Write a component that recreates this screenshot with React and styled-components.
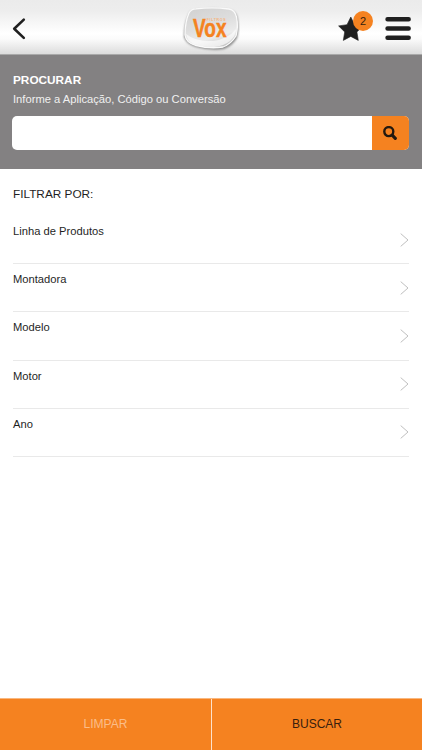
import React, { useState } from 'react';
import styled, { createGlobalStyle } from 'styled-components';

const GlobalStyle = createGlobalStyle`
  * { box-sizing: border-box; }
  body { margin: 0; background: #fff; }
  button, input { font: inherit; border: 0; padding: 0; margin: 0; background: none; }
`;

const Screen = styled.div`
  display: flex;
  flex-direction: column;
  width: 100%;
  height: 100vh;
  overflow: hidden;
  background: #fff;
  color: #1f1f1f;
  font-family: "Liberation Sans", Arial, sans-serif;
`;

const Header = styled.header`
  flex: none;
  display: grid;
  grid-template-columns: 1fr 58px 1fr;
  height: 55px;
  border-bottom: 1px solid #a9a9a9;
  background: linear-gradient(#ebebeb 0, #ededed 20%, #fff 62%, #fbfbfb 72%, #dcdcdc 100%);
`;

const HeaderSide = styled.div`
  display: flex;
  justify-content: ${({ $end }) => ($end ? 'flex-end' : 'flex-start')};
  align-items: flex-start;
`;

const IconButton = styled.button`
  position: relative;
  display: block;
  width: ${({ $width }) => $width}px;
  height: 54px;
  svg { display: block; }
`;

const Badge = styled.span`
  position: absolute;
  top: 10.5px;
  left: 16px;
  width: 20px;
  height: 20px;
  border-radius: 50%;
  background: #f58220;
  color: #33200f;
  font-size: 11px;
  line-height: 20px;
  text-align: center;
`;

const SearchPanel = styled.section`
  flex: none;
  height: 114px;
  padding: 17px 13px 0 12px;
  background: #838182;
  color: #fff;
`;

const Title = styled.h1`
  margin: 0 0 0 1px;
  font-size: 11.8px;
  line-height: 16px;
`;

const Hint = styled.p`
  margin: 4px 0 0 1px;
  font-size: 11.2px;
  line-height: 14px;
  color: #f0f0f0;
`;

const SearchField = styled.form`
  display: flex;
  height: 34px;
  margin-top: 10px;
  overflow: hidden;
  border-radius: 5px;
  background: #fff;
`;

const SearchInput = styled.input`
  flex: 1;
  min-width: 0;
  padding: 0 10px;
  outline: 0;
  font-size: 14px;
`;

const SearchButton = styled.button`
  display: flex;
  align-items: center;
  justify-content: center;
  width: 37px;
  padding: 0 1px 1px 0;
  background: #f58220;
`;

const Filters = styled.main`
  flex: 1;
  padding: 17px 13px 0;
`;

const FilterTitle = styled.h2`
  margin: 0 0 13px;
  font-size: 11.8px;
  font-weight: 400;
  line-height: 17px;
`;

const FilterRow = styled.div`
  display: flex;
  justify-content: space-between;
  height: 48.2px;
  border-bottom: 1px solid #e9e9e9;
  font-size: 11.2px;
  line-height: 14px;
  padding-top: 8px;
`;

const RowIcon = styled.span`
  display: flex;
  align-items: flex-start;
  padding-top: 8.5px;
`;

const Footer = styled.footer`
  flex: none;
  display: grid;
  grid-template-columns: 1fr 1fr;
  height: 52px;
  border-top: 1px solid #f9b77e;
  background: #f58220;
`;

const FooterButton = styled.button`
  color: ${({ $muted }) => ($muted ? '#fbbd88' : '#38200e')};
  font-size: 12px;
  padding-bottom: 1px;
  & + & { border-left: 1px solid #fde2cc; }
`;

const Logo = () => (
  <svg width="58" height="54" viewBox="0 0 58 54" aria-label="Filtros Vox">
    <defs>
      <linearGradient id="plate" x1="0.2" y1="0" x2="0.6" y2="1">
        <stop offset="0" stopColor="#d2d2d2" />
        <stop offset="0.45" stopColor="#dedede" />
        <stop offset="0.75" stopColor="#ececec" />
        <stop offset="1" stopColor="#c6c6c6" />
      </linearGradient>
      <filter id="shade" x="-20%" y="-20%" width="140%" height="140%">
        <feGaussianBlur stdDeviation="1" />
      </filter>
    </defs>
    <path d="M14 10Q31 7 48 10Q54 11 55.500 18Q57.500 29 55 38Q50 46 42 49Q29 51 14 47Q4 44 2 37Q2 23 7 14Q9 10 14 10Z" fill="#858585" filter="url(#shade)" />
    <path d="M14 8.800Q31 7 47 9Q53 10 54.500 17Q56.500 27 54 36Q49 44 41 47Q28 49 14 45.500Q4 43 3 35Q3 22 7 13Q9 9 14 8.800Z" fill="url(#plate)" stroke="#fafafa" strokeWidth="1.300" />
    <path d="M4 34Q14 42 31 41Q46 39 54 29Q54 36 48 41Q42 46 32 47Q20 47 12 44Q5 41 4 34Z" fill="#fff" opacity="0.65" />
    <text x="24.700" y="20.800" textLength="19" fontFamily="Liberation Sans" fontWeight="700" fontSize="3.600" fill="#f5b581">FILTROS</text>
    <text x="11" y="36.700" textLength="33.500" lengthAdjust="spacingAndGlyphs" fontFamily="Liberation Sans" fontWeight="700" fontSize="26.500" fill="#f58220" stroke="#f58220" strokeWidth="0.500">Vox</text>
  </svg>
);

const BackIcon = () => (
  <svg width="38" height="54" fill="none" stroke="#202020" strokeWidth="2.600" strokeLinecap="round" strokeLinejoin="round">
    <path d="M23.800 19.600L14.200 28.700L23.800 37.900" />
  </svg>
);

const StarIcon = () => (
  <svg width="36" height="54" fill="#202020">
    <path d="M13.800 17L17.600 24.700L26 25.900L19.900 31.900L21.300 40.400L13.800 36.400L6.300 40.400L7.700 31.900L1.600 25.900L10 24.700Z" stroke="#202020" strokeWidth="0.600" />
  </svg>
);

const MenuIcon = () => (
  <svg width="49" height="54" stroke="#202020" strokeWidth="4.600" strokeLinecap="round">
    <path d="M14.600 19.200H35.600M14.600 28.500H35.600M14.600 37.700H35.600" />
  </svg>
);

const SearchIcon = () => (
  <svg width="14" height="14" viewBox="0 0 14 14" fill="none" stroke="#24190f">
    <circle cx="5.800" cy="5.600" r="4.500" strokeWidth="2.400" />
    <path d="M9.200 9.200L12.300 12.300" strokeWidth="3.200" strokeLinecap="round" />
  </svg>
);

const Chevron = () => (
  <svg width="9" height="14" viewBox="0 0 9 14" fill="none" stroke="#bfbfbf" strokeWidth="1">
    <path d="M0.700 0.600L8 7L0.700 13.400" />
  </svg>
);

const filters = ['Linha de Produtos', 'Montadora', 'Modelo', 'Motor', 'Ano'];

export default function App() {
  const [query, setQuery] = useState('');
  return (
    <Screen>
      <GlobalStyle />
      <Header>
        <HeaderSide>
          <IconButton $width={38} aria-label="Voltar"><BackIcon /></IconButton>
        </HeaderSide>
        <Logo />
        <HeaderSide $end>
          <IconButton $width={36} aria-label="Favoritos"><StarIcon /><Badge>2</Badge></IconButton>
          <IconButton $width={49} aria-label="Menu"><MenuIcon /></IconButton>
        </HeaderSide>
      </Header>
      <SearchPanel>
        <Title>PROCURAR</Title>
        <Hint>Informe a Aplicação, Código ou Conversão</Hint>
        <SearchField onSubmit={(e) => e.preventDefault()}>
          <SearchInput value={query} onChange={(e) => setQuery(e.target.value)} aria-label="Procurar" />
          <SearchButton aria-label="Pesquisar"><SearchIcon /></SearchButton>
        </SearchField>
      </SearchPanel>
      <Filters>
        <FilterTitle>FILTRAR POR:</FilterTitle>
        {filters.map((name) => (
          <FilterRow key={name}>
            <span>{name}</span>
            <RowIcon><Chevron /></RowIcon>
          </FilterRow>
        ))}
      </Filters>
      <Footer>
        <FooterButton $muted onClick={() => setQuery('')}>LIMPAR</FooterButton>
        <FooterButton>BUSCAR</FooterButton>
      </Footer>
    </Screen>
  );
}
